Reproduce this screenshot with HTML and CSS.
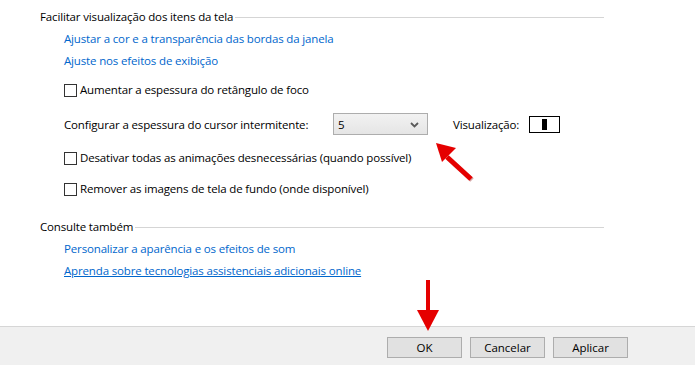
FILE: index.html
```html
<!DOCTYPE html>
<html lang="pt-BR">
<head>
<meta charset="utf-8">
<title>Facilitar visualização</title>
<link rel="stylesheet" href="styles.css">
</head>
<body>
<div class="window">
  <main class="content">
    <div class="group-title heading"><span>Facilitar visualização dos itens da tela</span><i class="rule"></i></div>
    <a class="link l1" href="#">Ajustar a cor e a transparência das bordas da janela</a>
    <a class="link l2" href="#">Ajuste nos efeitos de exibição</a>
    <label class="check c1"><span class="box"></span>Aumentar a espessura do retângulo de foco</label>
    <div class="combo-row">
      <span class="combo-label">Configurar a espessura do cursor intermitente:</span>
      <div class="combo"><span>5</span>
        <svg class="chev" width="9" height="6" viewBox="0 0 9 6"><path d="M1 1 L4.5 4.5 L8 1" fill="none" stroke="#5a5a5a" stroke-width="1.8"/></svg>
      </div>
      <span class="preview-label">Visualização:</span>
      <div class="preview"><i class="caret"></i></div>
    </div>
    <label class="check c2"><span class="box"></span>Desativar todas as animações desnecessárias (quando possível)</label>
    <label class="check c3"><span class="box"></span>Remover as imagens de tela de fundo (onde disponível)</label>
    <div class="group-title see"><span>Consulte também</span><i class="rule"></i></div>
    <a class="link l1" href="#">Personalizar a aparência e os efeitos de som</a>
    <a class="link l2 under" href="#">Aprenda sobre tecnologias assistenciais adicionais online</a>
  </main>
  <footer class="footer">
    <button class="btn">OK</button>
    <button class="btn">Cancelar</button>
    <button class="btn">Aplicar</button>
  </footer>
  <svg class="arrow arrow-diag" width="60" height="60" viewBox="0 0 60 60">
    <path d="M37 38 L13 16" stroke="#8a0000" stroke-width="5" opacity="0.35" transform="translate(1,1)"/>
    <path d="M37 38 L13 16" stroke="#e50000" stroke-width="5"/>
    <polygon points="2,2 22,7 8,21" fill="#e50000"/>
  </svg>
  <svg class="arrow arrow-down" width="24" height="54" viewBox="0 0 24 54">
    <rect x="10" y="0" width="4" height="32" fill="#e50000"/>
    <polygon points="1,30 23,30 12,51" fill="#e50000"/>
  </svg>
</div>
</body>
</html>
```
FILE: styles.css
```css
html, body {
  margin: 0;
  padding: 0;
  background: #fff;
}
body {
  font-family: "Open Sans", "Liberation Sans", sans-serif;
  font-size: 11.5px;
  letter-spacing: -0.15px;
  color: #000;
}
.window {
  position: relative;
  width: 695px;
  height: 365px;
  overflow: hidden;
}
.content {
  height: 326px;
  box-sizing: border-box;
  padding: 9px 91px 0 40px;
  display: flex;
  flex-direction: column;
  align-items: flex-start;
}
.group-title {
  display: flex;
  align-items: center;
  align-self: stretch;
  height: 16px;
  line-height: 16px;
  white-space: nowrap;
}
.group-title .rule {
  flex: 1;
  height: 1px;
  background: #d5d5d5;
  margin-left: 2px;
  margin-top: 1px;
}
.see { margin-top: 22px; }
.link {
  display: block;
  height: 16px;
  line-height: 16px;
  margin-left: 24px;
  color: #0066cc;
  text-decoration: none;
  margin-top: 6px;
}
.link.under { text-decoration: underline; }
.check {
  display: flex;
  align-items: center;
  height: 16px;
  line-height: 16px;
  margin-left: 24px;
}
.check .box {
  width: 11px;
  height: 11px;
  border: 1px solid #333;
  background: #fff;
  margin-right: 3px;
}
.c1 { margin-top: 13px; }
.c2, .c3 { margin-top: 15px; }
.combo-row {
  display: flex;
  align-items: center;
  height: 22px;
  margin-top: 15px;
  margin-left: 24px;
}
.combo-label { width: 269px; }
.combo {
  box-sizing: border-box;
  width: 95px;
  height: 22px;
  border: 1px solid #adadad;
  background: linear-gradient(#f2f2f2, #e5e5e5);
  display: flex;
  align-items: center;
  justify-content: space-between;
  padding: 0 8px 0 4px;
}
.chev { margin-top: 1px; }
.preview-label { margin-left: 25px; }
.preview {
  box-sizing: border-box;
  width: 31px;
  height: 17px;
  border: 1px solid #000;
  margin-left: 10px;
  display: flex;
  justify-content: center;
  align-items: center;
}
.caret {
  width: 5px;
  height: 11px;
  background: #000;
}
.footer {
  height: 39px;
  box-sizing: border-box;
  border-top: 1px solid #d6d6d6;
  background: #f0f0f0;
  display: flex;
  justify-content: flex-end;
  gap: 8px;
  padding: 10px 67px 0 0;
}
.btn {
  box-sizing: border-box;
  width: 75px;
  height: 21px;
  border: 1px solid #adadad;
  background: #e1e1e1;
  font: inherit;
  color: #000;
  padding: 0;
  line-height: 19px;
}
.arrow {
  position: absolute;
  overflow: visible;
}
.arrow-diag { left: 434px; top: 141px; }
.arrow-down { left: 416px; top: 280px; }
```
